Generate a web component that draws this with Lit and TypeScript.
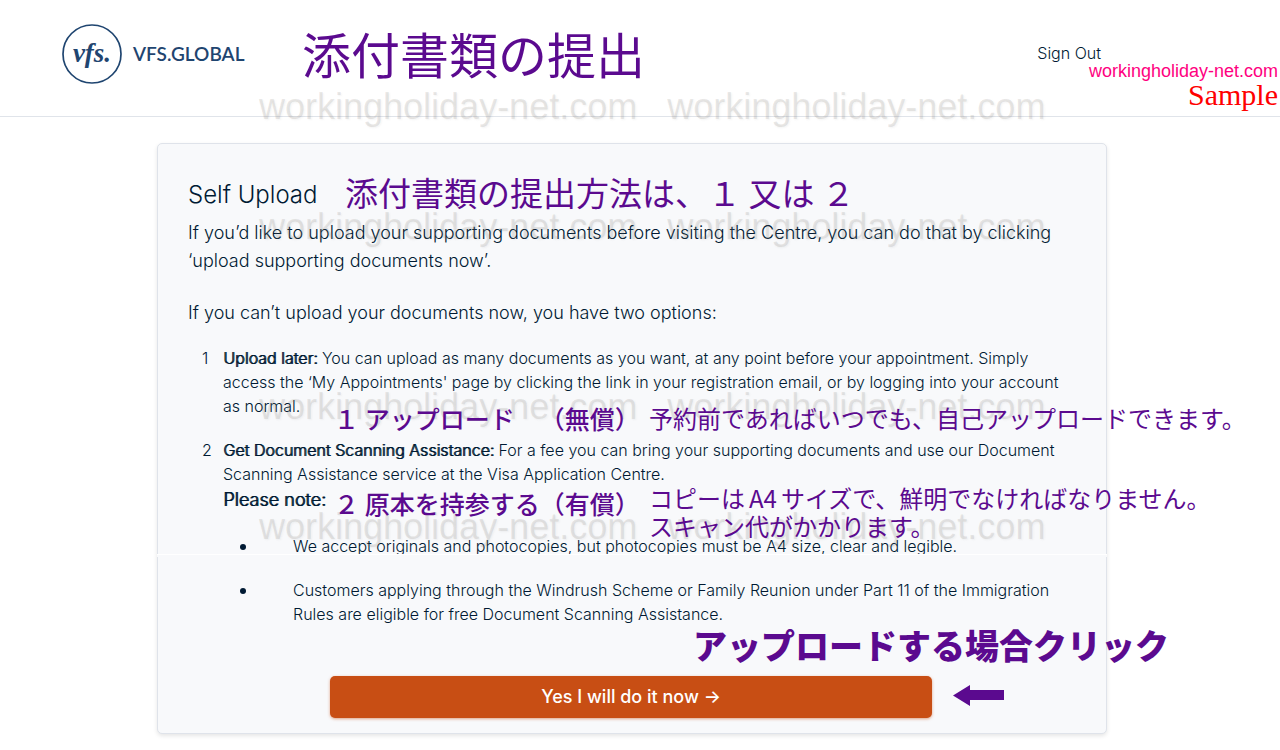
import { LitElement, html, css } from "lit";
import { customElement } from "lit/decorators.js";

@customElement("vfs-logo")
class VfsLogo extends LitElement {
  static styles = css`
    :host {
      display: block;
    }
    .brand {
      display: flex;
      align-items: center;
      gap: 10px;
      color: #1f4570;
      text-decoration: none;
      font: 600 19px/24px Lato, sans-serif;
    }
    .mark {
      display: block;
      width: 62px;
      height: 62px;
    }
    .script {
      font: italic 700 27px "Liberation Serif", serif;
    }
  `;

  render() {
    return html`
      <a class="brand" href="#">
        <svg class="mark" viewBox="0 0 62 62" aria-hidden="true">
          <circle cx="31" cy="31" r="29" fill="none" stroke="#1f4570" stroke-width="1.7" />
          <text class="script" x="31" y="39" text-anchor="middle" fill="#1f4570">vfs.</text>
        </svg>
        <span>VFS.GLOBAL</span>
      </a>
    `;
  }
}

@customElement("app-root")
class AppRoot extends LitElement {
  static styles = css`
    :host {
      display: block;
      font-family: Inter, sans-serif;
      font-weight: 350;
      color: #001a33;
      background: #fff;
    }
    .page {
      position: relative;
      overflow: hidden;
      min-height: 750px;
      box-sizing: border-box;
    }
    .header {
      display: flex;
      justify-content: space-between;
      align-items: center;
      padding: 23px 179px 31px 61px;
      border-bottom: 1px solid #e0e4ea;
    }
    .signout {
      padding-bottom: 2px;
      font-size: 16px;
      line-height: 24px;
      color: inherit;
      text-decoration: none;
    }
    .main {
      padding: 26px 16px 16px 0;
    }
    .card {
      max-width: 950px;
      margin: 0 auto;
      box-sizing: border-box;
      padding: 35px 32px 15px 30px;
      background: #f8f9fb;
      border: 1px solid #dfe3ea;
      border-radius: 5px;
      box-shadow: 0 2px 4px rgba(0, 0, 0, 0.1);
    }
    h1 {
      margin: 0 0 8px;
      font-size: 24px;
      line-height: 32px;
      font-weight: 350;
    }
    .lead {
      margin: 0 0 24px;
      font-size: 18px;
      line-height: 28px;
    }
    .options {
      margin: -5px 0 0;
      padding: 0 0 0 35px;
      font-size: 16px;
      line-height: 24px;
      list-style: none;
      counter-reset: option;
    }
    .option {
      position: relative;
      counter-increment: option;
      margin-bottom: 20px;
    }
    .option::before {
      content: counter(option);
      position: absolute;
      left: -21px;
    }
    strong {
      font-weight: 350;
      text-shadow: 1px 0 0 currentColor;
    }
    .note {
      display: block;
      font-size: 18px;
      line-height: 28px;
    }
    .notes {
      margin: 20px 0 0;
      padding: 0 0 0 70px;
      list-style: none;
    }
    .notes li {
      position: relative;
      margin-bottom: 20px;
    }
    .notes li::before {
      content: "";
      position: absolute;
      left: -53px;
      top: 10px;
      width: 6px;
      height: 6px;
      border-radius: 50%;
      background: #001a33;
    }
    .submit {
      display: block;
      width: 602px;
      max-width: 100%;
      margin: 50px auto 0;
      padding: 7px 16px;
      border: 0;
      border-radius: 5px;
      background: #c84e14;
      box-shadow: 0 1px 3px rgba(200, 78, 20, 0.5);
      color: #fff;
      font: 450 18px/28px Inter, sans-serif;
    }
    .seam {
      position: absolute;
      top: 554px;
      left: 157px;
      width: 950px;
      height: 3px;
      box-sizing: border-box;
      border-top: 1px solid #fff;
      background: #f8f9fb;
    }
    .watermark {
      position: absolute;
      left: 259px;
      display: flex;
      gap: 30px;
      font: 36px/40px "Liberation Sans", sans-serif;
      color: rgba(128, 120, 110, 0.17);
      text-shadow: 1px 1px 2px rgba(120, 120, 110, 0.08);
      white-space: nowrap;
      pointer-events: none;
    }
    .w1 { top: 87px; }
    .w2 { top: 207px; }
    .w3 { top: 387px; }
    .w4 { top: 507px; }
    .jp {
      position: absolute;
      margin: 0;
      color: #5b0a8f;
      font-family: "Noto Sans CJK JP", sans-serif;
      font-weight: 400;
      font-size: 24px;
      line-height: 28px;
      white-space: nowrap;
      text-spacing-trim: space-all;
    }
    .title { left: 302px; top: 25px; font-size: 49px; line-height: 56px; }
    .method { left: 345px; top: 174px; font-size: 33px; line-height: 36px; }
    .free { left: 334px; top: 404px; font-size: 25px; font-weight: 500; }
    .free-note { left: 649px; top: 404px; }
    .paid { left: 334px; top: 489px; font-size: 25px; font-weight: 500; }
    .paid-note { left: 649px; top: 484px; }
    .wide { padding: 0 4px; }
    .click { left: 693px; top: 627px; font-size: 34px; line-height: 36px; font-weight: 900; }
    .arrow {
      position: absolute;
      left: 953px;
      top: 685px;
      width: 51px;
      height: 21px;
    }
    .source {
      position: absolute;
      right: 2px;
      top: 61px;
      font: 18px/20px "Liberation Sans", sans-serif;
      color: #ff0080;
    }
    .sample {
      position: absolute;
      right: 2px;
      top: 79px;
      font: 30px/32px "Liberation Serif", serif;
      color: #f00;
    }
  `;

  render() {
    const mark = "workingholiday-net.com";
    return html`
      <div class="page">
        <header class="header">
          <vfs-logo></vfs-logo>
          <a class="signout" href="#">Sign Out</a>
        </header>
        <main class="main">
          <section class="card">
            <h1>Self Upload</h1>
            <p class="lead">
              If you’d like to upload your supporting documents before visiting the Centre, you can do that by
              clicking ‘upload supporting documents now’.
            </p>
            <p class="lead">If you can’t upload your documents now, you have two options:</p>
            <ol class="options">
              <li class="option">
                <strong>Upload later:</strong> You can upload as many documents as you want, at any point before
                your appointment. Simply access the ‘My Appointments' page by clicking the link in your
                registration email, or by logging into your account as normal.
              </li>
              <li class="option">
                <strong>Get Document Scanning Assistance:</strong> For a fee you can bring your supporting
                documents and use our Document Scanning Assistance service at the Visa Application Centre.
                <strong class="note">Please note:</strong>
                <ul class="notes">
                  <li>We accept originals and photocopies, but photocopies must be A4 size, clear and legible.</li>
                  <li>
                    Customers applying through the Windrush Scheme or Family Reunion under Part 11 of the
                    Immigration Rules are eligible for free Document Scanning Assistance.
                  </li>
                </ul>
              </li>
            </ol>
            <button class="submit" type="button">Yes I will do it now →</button>
          </section>
        </main>

        <div class="seam"></div>
        ${["w1", "w2", "w3", "w4"].map(
          (row) => html`<div class="watermark ${row}"><span>${mark}</span><span>${mark}</span></div>`
        )}
        <span class="source">${mark}</span>
        <span class="sample">Sample</span>

        <p class="jp title" lang="ja">添付書類の提出</p>
        <p class="jp method" lang="ja">添付書類の提出方法は、１ 又は ２</p>
        <p class="jp free" lang="ja">１ アップロード　（無償）</p>
        <p class="jp free-note" lang="ja">予約前であればいつでも、自己アップロードできます。</p>
        <p class="jp paid" lang="ja">２ 原本を持参する（有償）</p>
        <p class="jp paid-note" lang="ja">
          コピーは<span class="wide">A4</span>サイズで、鮮明でなければなりません。<br />スキャン代がかかります。
        </p>
        <p class="jp click" lang="ja">アップロードする場合クリック</p>
        <svg class="arrow" viewBox="0 0 51 21" aria-hidden="true">
          <path d="M0 10.500 17 0v5h34v10H17v6z" fill="#5b0a8f" />
        </svg>
      </div>
    `;
  }
}
